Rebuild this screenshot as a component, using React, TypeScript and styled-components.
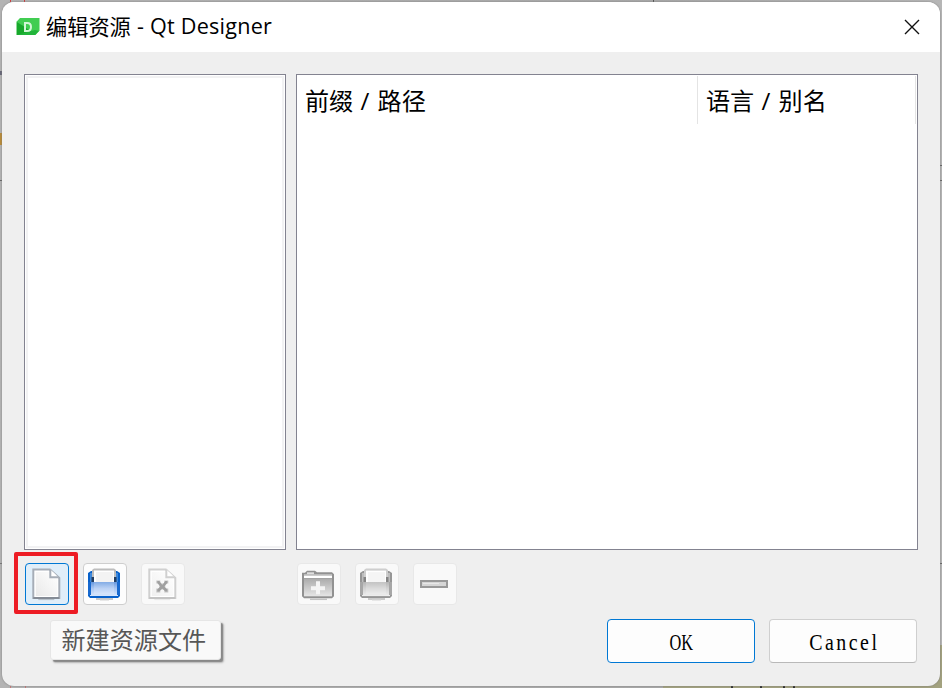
import React from "react";
import styled, { createGlobalStyle } from "styled-components";

const GlobalStyle = createGlobalStyle`
  * { box-sizing: border-box; }
  html, body { margin: 0; height: 100%; overflow: hidden; }
  body { font-family: "Noto Sans CJK SC", sans-serif; color: #000; }
`;

const Desktop = styled.main`
  width: 942px;
  height: 688px;
  padding: 2px;
  background:
    linear-gradient(#d23c3c, #d23c3c) 10px 0 / 1px 2px no-repeat,
    linear-gradient(#d23c3c, #d23c3c) 24px 0 / 1px 2px no-repeat,
    linear-gradient(#c87878, #c87878) 10px 686px / 1px 2px no-repeat,
    linear-gradient(#c87878, #c87878) 25px 686px / 1px 2px no-repeat,
    linear-gradient(#555, #555) 653px 0 / 1px 2px no-repeat,
    linear-gradient(#303030, #303030) 731px 686px / 2px 2px no-repeat,
    linear-gradient(#303030, #303030) 760px 686px / 2px 2px no-repeat,
    linear-gradient(#303030, #303030) 783px 686px / 2px 2px no-repeat,
    linear-gradient(#303030, #303030) 793px 686px / 2px 2px no-repeat,
    linear-gradient(#666, #666) 0 180px / 2px 1px no-repeat,
    linear-gradient(#ba8b35, #ba8b35) 0 133px / 2px 12px no-repeat,
    linear-gradient(#667, #667) 0 71px / 2px 4px no-repeat,
    linear-gradient(#777, #777) 0 563px / 2px 1px no-repeat,
    linear-gradient(#666, #666) 940px 165px / 2px 1px no-repeat,
    linear-gradient(#666, #666) 940px 180px / 2px 1px no-repeat,
    linear-gradient(#666, #666) 940px 563px / 2px 1px no-repeat,
    linear-gradient(#a3a27f, #a3a27f) 663px 645px / 279px 43px no-repeat,
    linear-gradient(90deg, #b4b4b4, #a8a8a8 70%, #b6b6b6);
`;

const Dialog = styled.section`
  width: 938px;
  height: 684px;
  display: flex;
  flex-direction: column;
  background: #efefef;
  border-radius: 12px;
  overflow: hidden;
  box-shadow: 0 0 2px #777;
`;

const TitleBar = styled.header`
  height: 50px;
  flex: none;
  display: flex;
  align-items: center;
  padding: 0 20.5px 0 14px;
  background: #fff;
`;

const Title = styled.h1`
  margin: 0 auto 2px 6px;
  font: 400 21.2px/30px "Noto Sans CJK SC", sans-serif;
  display: flex;
  white-space: pre;
`;

const TitleLatin = styled.span`
  font-family: "Open Sans", "Noto Sans", sans-serif;
  font-size: 21.6px;
  letter-spacing: 0.22px;
  padding-left: 0.5px;
`;

const CloseButton = styled.button`
  width: 16px;
  height: 16px;
  margin-bottom: 1px;
  padding: 0;
  border: 0;
  background: none;
  display: flex;
`;

const Body = styled.div`
  flex: 1;
  display: grid;
  grid-template-columns: 262px 622px;
  grid-template-rows: 476px 42px 44px;
  column-gap: 10px;
  padding: 22px 22px 0;
`;

const FileList = styled.div`
  border: 1px solid #838390;
  background: #fff;
  padding: 1px;
`;

const FileListInner = styled.div`
  height: 100%;
  border: 2px solid #f2f2f3;
`;

const Tree = styled.div`
  border: 1px solid #838390;
  background: #fff;
  padding: 1px 1px 0 0;
`;

const TreeHeader = styled.div`
  height: 48px;
  display: grid;
  grid-template-columns: 401px 218px;
`;

const HeaderCell = styled.div`
  height: 48px;
  border-right: 1px solid #e4e4e4;
  padding-left: 8px;
  font-size: 24.1px;
  line-height: 47px;
  white-space: pre;
`;

const Slash = styled.span`
  font-family: "Open Sans", sans-serif;
  letter-spacing: 1px;
`;

const ToolRow = styled.div`
  display: flex;
  gap: 14px;
  padding: 13px 0 0 1px;
`;

const ToolButton = styled.button<{ $tone: "active" | "normal" | "disabled" }>`
  width: 44px;
  height: 42px;
  flex: none;
  display: flex;
  padding: 0;
  border-radius: 4px;
  border: 1px solid
    ${({ $tone }) => ($tone === "active" ? "#0078d4" : $tone === "normal" ? "#cecece" : "#e8e8e8")};
  background: ${({ $tone }) =>
    $tone === "active" ? "#e0eef9" : $tone === "normal" ? "#fdfdfd" : "#f9f9f9"};
  position: relative;
`;

const Highlight = styled.span`
  position: absolute;
  left: -12px;
  top: -12px;
  width: 64px;
  height: 62px;
  border: 4px solid #ed1c24;
  border-radius: 2px;
  pointer-events: none;
`;

const Tooltip = styled.div`
  position: absolute;
  left: 50px;
  top: 620px;
  width: 171px;
  height: 40px;
  padding-left: 10.5px;
  background: #f9f9f9;
  border: 1px solid #e6e6e6;
  border-radius: 3px;
  box-shadow: 2.5px 2.5px 1px -1px #888, 3px 3px 2px #bbb;
  color: #575757;
  font-size: 24.1px;
  line-height: 35px;
  white-space: nowrap;
`;

const DialogButtons = styled.div`
  grid-column: 1 / -1;
  display: flex;
  justify-content: flex-end;
  gap: 14px;
  padding: 27px 1px 0 0;
`;

const PushButton = styled.button<{ $primary?: boolean }>`
  width: 148px;
  height: 44px;
  flex: none;
  padding: 2px 0 0;
  border: 1px solid ${({ $primary }) => ($primary ? "#0078d4" : "#cfcfcf")};
  border-bottom-color: ${({ $primary }) => ($primary ? "#0078d4" : "#b9b9b9")};
  border-radius: 4px;
  background: #fdfdfd;
  color: #000;
  font: 24px/36px "Liberation Serif", serif;
`;

const ButtonLabel = styled.span<{ $scale: number; $spacing: number }>`
  display: inline-block;
  transform: scaleX(${({ $scale }) => $scale});
  letter-spacing: ${({ $spacing }) => $spacing}px;
  margin-right: -${({ $spacing }) => $spacing}px;
`;

const Glyph = styled.svg`
  display: block;
  flex: none;
`;

function AppIcon() {
  return (
    <Glyph width="24" height="20" viewBox="0 0 24 20">
      <path d="M4 1h19.5v12.5l-4 4.5H.7V4.5z" fill="#41cd52" />
      <path d="M.7 5v13H19L9 10z" fill="#17a82b" />
      <path d="M.7 18H19l4-4-4-1z" fill="#21b53a" />
      <path
        d="M9 6h2.2c2.8 0 3.8 1.6 3.8 3.9s-1.1 4.1-3.8 4.1H9z"
        fill="none"
        stroke="#d2f6d7"
        strokeWidth="2"
      />
    </Glyph>
  );
}

function PageIcon({ removed = false }: { removed?: boolean }) {
  const edge = removed ? "#d0d0d0" : "#a6adb7";
  const id = removed ? "page-off" : "page-on";
  return (
    <Glyph width="42" height="40" viewBox="0.7 0.9 42 40">
      <defs>
        <linearGradient id={id} x1="1" y1="0" x2="0" y2="1">
          <stop offset="0" stopColor="#fff" />
          <stop offset="1" stopColor={removed ? "#f0f0f0" : "#e9e9e9"} />
        </linearGradient>
      </defs>
      <path d="M7 5.5h18l10 9V36H7z" fill={edge} />
      <path d="M9 7.3H24l9 8v18.7h-24z" fill="#fff" />
      <path d="M10.5 9h13.5v6h8v18H10.5z" fill={`url(#${id})`} />
      <path d="M25 6.5v7.7h8.2" fill="#fff" stroke={edge} strokeWidth="2" />
      <path d="M27 8.5v4h4z" fill="#fff" />
      <path d="M8 35h26" stroke={removed ? "#c4c4c4" : "#858c96"} strokeWidth="2" />
      <path d="M13 36.5h16" stroke={removed ? "#e7e7e7" : "#b3bcc5"} />
      {removed && (
        <>
          <path d="M15 17.5h4v3h4v-3h4v3h-3v5h3v4h-4v-3h-4v3h-4v-4h3v-5h-3z" fill="#c5c5c5" />
          <path d="M16 18h2l3 4 3-4h2v2l-3 3.5 3 3v2h-2l-3-3-3 3h-2v-2l3-3-3-3.5z" fill="#a0a0a0" />
        </>
      )}
    </Glyph>
  );
}

function TrayIcon({ disabled = false }: { disabled?: boolean }) {
  const id = disabled ? "tray-off" : "tray-on";
  const edge = disabled ? "#969696" : "#0861ca";
  return (
    <Glyph width="42" height="40" viewBox="0 0.9 42 40">
      <defs>
        <linearGradient id={id} x1="0" y1="0" x2="0" y2="1">
          <stop offset="0" stopColor={disabled ? "#b4b4b4" : "#6598df"} />
          <stop offset="0.45" stopColor={disabled ? "#d2d2d2" : "#a9c6f2"} />
          <stop offset="1" stopColor={disabled ? "#efefef" : "#dae8fd"} />
        </linearGradient>
      </defs>
      <path d="M4 10l3-2h26l3 2v23l-2 2H6l-2-2z" fill={edge} />
      <path d="M6 10h4v10H6zm24 0h4v10h-4z" fill={disabled ? "#bdbdbd" : "#3e88db"} />
      <path d="M7.5 14h3v5h-3zm22 0h3v5h-3z" fill={disabled ? "#858585" : "#233e61"} />
      <path d="M8 7l2-1.5h20L32 7v7H8z" fill={disabled ? "#cecece" : "#bdbdbd"} />
      <path d="M10 7.5h20v12H10z" fill="#fff" />
      <path d="M12 9h17v10H12z" fill={disabled ? "#f5f5f5" : "#f3f3f3"} />
      <path d="M6 19h28v14H6z" fill={`url(#${id})`} />
      <path d="M4 19h3v13H4zm29 0h3v13h-3z" fill={disabled ? "#a7a7a7" : "#1769cf"} />
      <path d="M10 19h20v12H10z" fill="#fff" opacity=".2" />
      <path d="M12 35.9h17" stroke="#b8b8b8" strokeWidth="1.4" />
      <path d="M16 37h9" stroke="#dadada" />
    </Glyph>
  );
}

function FolderIcon() {
  return (
    <Glyph width="42" height="40" viewBox="0 0.7 42 40">
      <defs>
        <linearGradient id="folder" x1="0" y1="0" x2="0" y2="1">
          <stop offset="0" stopColor="#aaa" />
          <stop offset="1" stopColor="#e6e6e6" />
        </linearGradient>
      </defs>
      <path d="M4 9.5h3l2-2h8l2 1.5h15l2 2v22l-2 2H6l-2-2z" fill="#919191" />
      <path d="M9 9h7v2H9z" fill="#dedede" />
      <path d="M6 11h28v3H6z" fill="#ccc" />
      <path d="M6 12.7h28v2H6z" fill="#fff" />
      <path d="M6 15h28v18H6z" fill="url(#folder)" />
      <path d="M18 18h4v5h5v4h-5v4h-4v-4h-5v-4h5z" fill="#f4f4f4" />
      <path d="M12 36h17" stroke="#c3c3c3" strokeWidth="1.5" />
    </Glyph>
  );
}

function MinusIcon() {
  return (
    <Glyph width="42" height="40" viewBox="0 0 42 40">
      <path d="M7 17h26v6H7z" fill="#d6d6d6" stroke="#999" strokeWidth="2" />
      <path d="M9 19h16v1H9z" fill="#e8e8e8" />
    </Glyph>
  );
}

export default function App() {
  return (
    <>
      <GlobalStyle />
      <Desktop>
        <Dialog>
          <TitleBar>
            <AppIcon />
            <Title>
              编辑资源<TitleLatin> - Qt Designer</TitleLatin>
            </Title>
            <CloseButton aria-label="Close">
              <Glyph width="16" height="16" viewBox="0 0 16 16">
                <path d="M1 1l14 14M15 1L1 15" stroke="#111" strokeWidth="1.4" />
              </Glyph>
            </CloseButton>
          </TitleBar>
          <Body>
            <FileList>
              <FileListInner />
            </FileList>
            <Tree>
              <TreeHeader>
                <HeaderCell>前缀<Slash> / </Slash>路径</HeaderCell>
                <HeaderCell>语言<Slash> / </Slash>别名</HeaderCell>
              </TreeHeader>
            </Tree>
            <ToolRow>
              <ToolButton $tone="active" aria-label="新建资源文件">
                <PageIcon />
                <Highlight />
              </ToolButton>
              <ToolButton $tone="normal">
                <TrayIcon />
              </ToolButton>
              <ToolButton $tone="disabled">
                <PageIcon removed />
              </ToolButton>
            </ToolRow>
            <ToolRow>
              <ToolButton $tone="disabled">
                <FolderIcon />
              </ToolButton>
              <ToolButton $tone="disabled">
                <TrayIcon disabled />
              </ToolButton>
              <ToolButton $tone="disabled">
                <MinusIcon />
              </ToolButton>
            </ToolRow>
            <DialogButtons>
              <PushButton $primary>
                <ButtonLabel $scale={0.68} $spacing={0}>OK</ButtonLabel>
              </PushButton>
              <PushButton>
                <ButtonLabel $scale={0.83} $spacing={3}>Cancel</ButtonLabel>
              </PushButton>
            </DialogButtons>
          </Body>
        </Dialog>
        <Tooltip role="tooltip">新建资源文件</Tooltip>
      </Desktop>
    </>
  );
}
